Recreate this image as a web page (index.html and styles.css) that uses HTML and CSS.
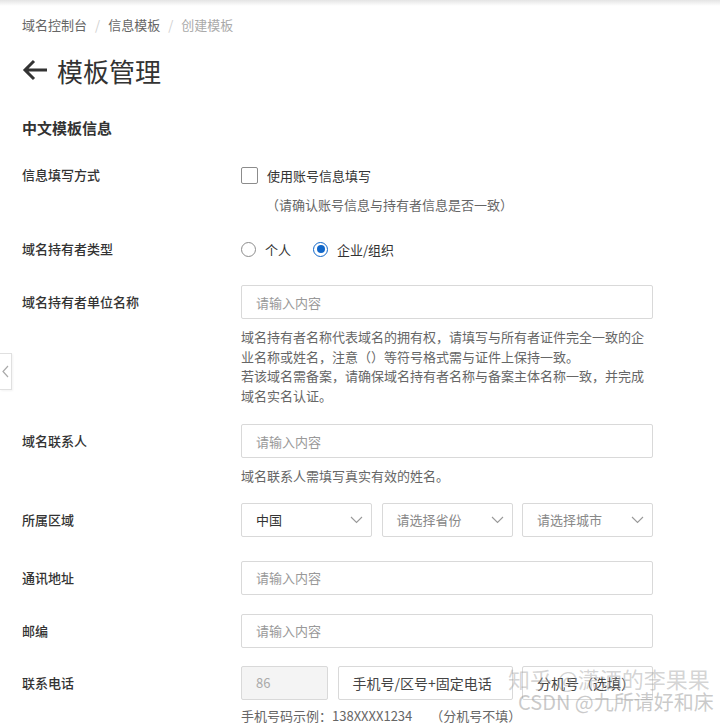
FILE: index.html
```html
<!DOCTYPE html>
<html lang="zh-CN">
<head>
<meta charset="utf-8">
<title>模板管理</title>
<link rel="stylesheet" href="styles.css">
</head>
<body>
<div class="topshade"></div>
<div class="page">
  <nav class="breadcrumb">
    <span class="crumb">域名控制台</span><span class="sep">/</span><span class="crumb">信息模板</span><span class="sep">/</span><span class="crumb current">创建模板</span>
  </nav>
  <h1 class="title">
    <svg class="back" width="26" height="22" viewBox="0 0 26 22"><path d="M12 2 L3 11 L12 20 M3 11 H25" fill="none" stroke="#333" stroke-width="3"/></svg>
    <span>模板管理</span>
  </h1>
  <h2 class="section-title">中文模板信息</h2>

  <div class="form">
    <div class="form-row">
      <div class="label">信息填写方式</div>
      <div class="control">
        <label class="check-line"><span class="checkbox"></span><span>使用账号信息填写</span></label>
        <div class="check-note">（请确认账号信息与持有者信息是否一致）</div>
      </div>
    </div>

    <div class="form-row gap-sm">
      <div class="label">域名持有者类型</div>
      <div class="control radios">
        <label class="radio-item"><span class="radio"></span><span>个人</span></label>
        <label class="radio-item"><span class="radio checked"></span><span>企业/组织</span></label>
      </div>
    </div>

    <div class="form-row">
      <div class="label">域名持有者单位名称</div>
      <div class="control">
        <input class="input" type="text" placeholder="请输入内容">
        <p class="help">域名持有者名称代表域名的拥有权，请填写与所有者证件完全一致的企业名称或姓名，注意（）等符号格式需与证件上保持一致。<br>若该域名需备案，请确保域名持有者名称与备案主体名称一致，并完成<br>域名实名认证。</p>
      </div>
    </div>

    <div class="form-row">
      <div class="label">域名联系人</div>
      <div class="control">
        <input class="input" type="text" placeholder="请输入内容">
        <p class="help">域名联系人需填写真实有效的姓名。</p>
      </div>
    </div>

    <div class="form-row gap-sm">
      <div class="label">所属区域</div>
      <div class="control selects">
        <div class="select"><span class="value">中国</span><svg width="13" height="8" viewBox="0 0 13 8"><path d="M1 1 L6.5 6.5 L12 1" fill="none" stroke="#999" stroke-width="1.1"/></svg></div>
        <div class="select"><span class="placeholder">请选择省份</span><svg width="13" height="8" viewBox="0 0 13 8"><path d="M1 1 L6.5 6.5 L12 1" fill="none" stroke="#999" stroke-width="1.1"/></svg></div>
        <div class="select"><span class="placeholder">请选择城市</span><svg width="13" height="8" viewBox="0 0 13 8"><path d="M1 1 L6.5 6.5 L12 1" fill="none" stroke="#999" stroke-width="1.1"/></svg></div>
      </div>
    </div>

    <div class="form-row gap-lg">
      <div class="label">通讯地址</div>
      <div class="control">
        <input class="input" type="text" placeholder="请输入内容">
      </div>
    </div>

    <div class="form-row">
      <div class="label">邮编</div>
      <div class="control">
        <input class="input" type="text" placeholder="请输入内容">
      </div>
    </div>

    <div class="form-row gap-md">
      <div class="label">联系电话</div>
      <div class="control">
        <div class="phones">
          <div class="box disabled">86</div>
          <div class="box phone-text">手机号/区号+固定电话</div>
          <div class="box phone-text">分机号（选填）</div>
        </div>
        <p class="help phone-help">手机号码示例：138XXXX1234<span class="ext">（分机号不填）</span></p>
      </div>
    </div>
  </div>
</div>

<div class="side-tab">
  <svg width="7" height="13" viewBox="0 0 7 13"><path d="M6 1 L1 6.5 L6 12" fill="none" stroke="#aaa" stroke-width="1.2"/></svg>
</div>

<div class="watermark">
  <div class="wm1">知乎 @潇洒的李果果</div>
  <div class="wm2">CSDN @九所请好和床</div>
</div>
</body>
</html>
```
FILE: styles.css
```css
* { box-sizing: border-box; }

html, body {
  margin: 0;
  padding: 0;
  background: #fff;
}

body {
  font-family: "Noto Sans CJK SC", "Noto Sans", sans-serif;
  color: #333;
  font-size: 13px;
  position: relative;
  min-height: 727px;
  overflow: hidden;
}

.topshade {
  height: 6px;
  background: linear-gradient(#e4e4e4, #ffffff);
}

.page {
  padding: 0 22px;
}

.breadcrumb {
  margin-top: 9px;
  line-height: 20px;
  font-size: 13px;
  color: #666;
}

.breadcrumb .sep {
  color: #d0d0d0;
  margin: 0 8px;
}

.breadcrumb .current {
  color: #aaa;
}

.title {
  margin: 17px 0 0;
  display: flex;
  align-items: center;
  height: 36px;
  font-size: 26px;
  font-weight: 400;
  color: #333;
}

.title .back {
  margin-right: 9px;
}

.section-title {
  margin: 29px 0 0;
  font-size: 15px;
  line-height: 22px;
  font-weight: 700;
  color: #333;
}

.form {
  margin-top: 19px;
}

.form-row {
  display: grid;
  grid-template-columns: 219px 412px;
  margin-top: 19px;
}

.form-row:first-child { margin-top: 0; }
.form-row.gap-sm { margin-top: 17px; }
.form-row.gap-md { margin-top: 18px; }
.form-row.gap-lg { margin-top: 24px; }

.label {
  line-height: 34px;
  font-size: 13px;
  font-weight: 500;
  color: #333;
}

.check-line {
  display: flex;
  align-items: center;
  height: 34px;
  color: #333;
}

.checkbox {
  width: 17px;
  height: 17px;
  border: 1px solid #8c8c8c;
  border-radius: 2px;
  margin-right: 9px;
}

.check-note {
  margin-top: 3px;
  line-height: 20px;
  color: #666;
  padding-left: 25px;
}

.radios {
  display: flex;
  align-items: center;
  height: 34px;
}

.radio-item {
  display: flex;
  align-items: center;
  margin-right: 22px;
}

.radio {
  width: 15px;
  height: 15px;
  border: 1px solid #8c8c8c;
  border-radius: 50%;
  margin-right: 9px;
  display: flex;
  align-items: center;
  justify-content: center;
}

.radio.checked {
  border: 1.5px solid #1167c9;
}

.radio.checked::after {
  content: "";
  width: 8px;
  height: 8px;
  border-radius: 50%;
  background: #1167c9;
}

.input {
  display: block;
  width: 100%;
  height: 34px;
  border: 1px solid #d9d9d9;
  border-radius: 2px;
  padding: 0 14px;
  font-family: inherit;
  font-size: 13px;
  color: #333;
  outline: none;
  background: #fff;
}

.input::placeholder {
  color: #999;
}

.help {
  margin: 8px 0 0;
  line-height: 19.5px;
  color: #666;
  font-size: 13px;
}

.selects {
  display: grid;
  grid-template-columns: repeat(3, 1fr);
  column-gap: 9.5px;
}

.select {
  height: 34px;
  border: 1px solid #d9d9d9;
  border-radius: 2px;
  display: flex;
  align-items: center;
  justify-content: space-between;
  padding: 0 8px 0 14px;
}

.select .value { color: #333; }
.select .placeholder { color: #888; }

.phones {
  display: grid;
  grid-template-columns: 87px 175px 131px;
  column-gap: 9.5px;
}

.box {
  height: 34px;
  border: 1px solid #d9d9d9;
  border-radius: 2px;
  display: flex;
  align-items: center;
  padding: 0 14px;
}

.box.disabled {
  background: #f4f4f4;
  color: #aaa;
  padding-left: 14px;
}

.phone-text {
  font-size: 14px;
  color: #444;
}

.phone-help {
  margin-top: 6px;
  line-height: 20px;
}

.phone-help .ext {
  margin-left: 18px;
}

.side-tab {
  position: absolute;
  left: 0;
  top: 353px;
  width: 12px;
  height: 37px;
  border: 1px solid #e0e0e0;
  border-left: none;
  background: #fff;
  display: flex;
  align-items: center;
  justify-content: center;
  box-shadow: 1px 1px 2px rgba(0,0,0,0.05);
}

.watermark {
  position: absolute;
  left: 508px;
  top: 665px;
  pointer-events: none;
}

.wm1 {
  font-size: 22px;
  line-height: 26px;
  color: rgba(160, 160, 160, 0.45);
}

.wm2 {
  margin-left: 10px;
  font-size: 20px;
  line-height: 22px;
  color: rgba(150, 150, 150, 0.5);
}
```
